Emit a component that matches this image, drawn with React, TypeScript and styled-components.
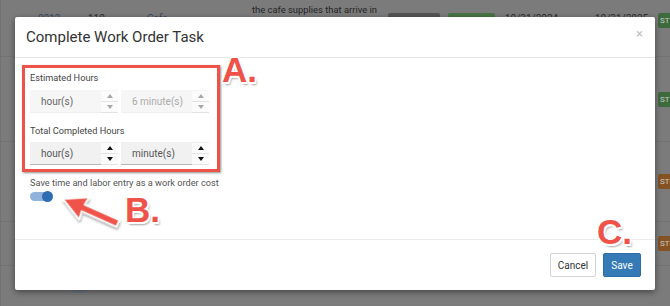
import React from 'react';
import styled, { createGlobalStyle } from 'styled-components';

const GlobalStyle = createGlobalStyle`
  html, body {
    margin: 0;
    padding: 0;
    background: #7b7b7b;
    overflow: hidden;
  }
  body {
    font-family: Roboto, "Liberation Sans", Arial, sans-serif;
  }
`;

const Page = styled.div`
  position: relative;
  width: 670px;
  height: 306px;
  overflow: hidden;
  background: #7b7b7b;
  border-left: 1px solid #727272;
  box-sizing: border-box;
`;

const BgTable = styled.div`
  display: flex;
  flex-direction: column;
`;

const BgRow = styled.div<{ $h: number; $top?: boolean }>`
  display: grid;
  grid-template-columns: 37px 50px 59px 105px 136px 60px 57px 90px 63px 1fr;
  align-items: ${(p) => (p.$top ? 'start' : 'center')};
  height: ${(p) => p.$h}px;
  padding-top: ${(p) => (p.$top ? 13 : 0)}px;
  box-sizing: border-box;
  border-bottom: 1px solid #737373;
  font-size: 10px;
  color: #2e2e2e;
`;

const Cell = styled.div<{ $link?: boolean }>`
  color: ${(p) => (p.$link ? '#3b4a5e' : '#2e2e2e')};
  white-space: nowrap;
`;

const Desc = styled.div`
  margin-top: -9px;
  line-height: 12px;
  font-size: 9.4px;
  color: #252525;
`;

const Badge = styled.div<{ $bg: string; $w: number }>`
  width: ${(p) => p.$w}px;
  height: 14px;
  border-radius: 2px;
  background: ${(p) => p.$bg};
`;

const SideBadge = styled.div<{ $bg: string }>`
  width: 30px;
  height: 15px;
  padding-left: 2px;
  box-sizing: border-box;
  border-radius: 2px;
  background: ${(p) => p.$bg};
  color: #c9c9c9;
  font-size: 8px;
  line-height: 15px;
`;

const BottomRow = styled.div`
  flex: 1;
  display: flex;
  align-items: flex-end;
  padding: 0 0 4px 64px;
`;

const Avatar = styled.div`
  width: 27px;
  height: 27px;
  border-radius: 50%;
  background: #6b7785;
`;

const Modal = styled.div`
  position: absolute;
  left: 14px;
  top: 17px;
  width: 640px;
  height: 273px;
  background: #fff;
  border-radius: 2px;
  box-shadow: 0 2px 6px rgba(0, 0, 0, 0.45);
  display: flex;
  flex-direction: column;
`;

const Header = styled.div`
  height: 40px;
  flex: none;
  display: flex;
  align-items: center;
  justify-content: space-between;
  padding: 0 12px 0 11px;
  border-bottom: 1px solid #e6e6e6;
`;

const Title = styled.h4`
  margin: 0;
  font-size: 15px;
  font-weight: 400;
  color: #333;
`;

const Close = styled.span`
  font-size: 13px;
  color: #c2c2c2;
  margin-top: -7px;
`;

const Body = styled.div`
  flex: 1;
  padding: 7px 7px 0;
`;

const RedBox = styled.div`
  width: 198px;
  box-sizing: border-box;
  border: 3px solid #ef5248;
  padding: 4px 5px 4px 5px;
  box-shadow: 1px 1px 2px rgba(0, 0, 0, 0.45);
`;

const Label = styled.div<{ $mt?: number }>`
  font-size: 9.2px;
  line-height: 12px;
  color: #444;
  margin-top: ${(p) => p.$mt ?? 0}px;
`;

const FieldRow = styled.div<{ $mt: number }>`
  display: flex;
  gap: 3px;
  margin-top: ${(p) => p.$mt}px;
`;

const InputGroup = styled.div<{ $active?: boolean }>`
  display: flex;
  width: 88px;
  height: 23px;
  box-sizing: border-box;
  background: ${(p) => (p.$active ? '#f1f1f1' : '#f6f6f6')};
  border-bottom: 1px solid ${(p) => (p.$active ? '#b5b5b5' : '#f0f0f0')};
`;

const InputText = styled.div<{ $color: string }>`
  flex: 1;
  display: flex;
  align-items: center;
  padding-left: 11px;
  font-size: 10px;
  color: ${(p) => p.$color};
`;

const Spinner = styled.div`
  width: 17px;
  display: flex;
  flex-direction: column;
  gap: 1px;
  padding-top: 1px;
  box-sizing: border-box;
`;

const SpinBtn = styled.div`
  flex: 1;
  display: flex;
  align-items: center;
  justify-content: center;
  background: #fbfbfb;
  box-shadow: 0 1px 0 #e3e3e3;
`;

const Tri = styled.span<{ $down?: boolean; $dark?: boolean }>`
  width: 0;
  height: 0;
  border-left: 3px solid transparent;
  border-right: 3px solid transparent;
  ${(p) => (p.$down ? 'border-top' : 'border-bottom')}: 4px solid ${(p) => (p.$dark ? '#111' : '#a8a8a8')};
`;

const ToggleLabel = styled.div`
  margin: 5px 0 0 8px;
  font-size: 9.2px;
  line-height: 12px;
  color: #555;
`;

const Track = styled.div`
  position: relative;
  width: 21px;
  height: 9px;
  margin: 3px 0 0 8px;
  border-radius: 5px;
  background: #8fb3da;
`;

const Knob = styled.div`
  position: absolute;
  right: -2px;
  top: -1px;
  width: 11px;
  height: 11px;
  border-radius: 50%;
  background: #2f6db3;
`;

const Footer = styled.div`
  height: 50px;
  flex: none;
  display: flex;
  align-items: center;
  justify-content: flex-end;
  gap: 7px;
  padding-right: 14px;
  border-top: 1px solid #ececec;
`;

const Button = styled.button<{ $primary?: boolean }>`
  height: 24px;
  width: ${(p) => (p.$primary ? 38 : 46)}px;
  padding: 0;
  font-family: Roboto, "Liberation Sans", Arial, sans-serif;
  font-size: 10px;
  border-radius: 2px;
  border: 1px solid ${(p) => (p.$primary ? '#2e6da4' : '#d4d4d4')};
  background: ${(p) => (p.$primary ? '#337ab7' : '#fff')};
  color: ${(p) => (p.$primary ? '#fff' : '#333')};
`;

const Mark = styled.div<{ $x: number; $y: number }>`
  position: absolute;
  left: ${(p) => p.$x}px;
  top: ${(p) => p.$y}px;
  font-family: "Liberation Sans", Arial, sans-serif;
  font-weight: 700;
  font-size: 35px;
  line-height: 1;
  color: #ef5248;
  text-shadow:
    -1.5px -1.5px 0 #fff, 1.5px -1.5px 0 #fff, -1.5px 1.5px 0 #fff, 1.5px 1.5px 0 #fff,
    0 -1.5px 0 #fff, 0 1.5px 0 #fff, -1.5px 0 0 #fff, 1.5px 0 0 #fff,
    2px 3px 2px rgba(0, 0, 0, 0.35);
`;

const ArrowLayer = styled.svg`
  position: absolute;
  left: 0;
  top: 0;
  pointer-events: none;
`;

function NumberField({ text, color, active }: { text: string; color: string; active?: boolean }) {
  return (
    <InputGroup $active={active}>
      <InputText $color={color}>{text}</InputText>
      <Spinner>
        <SpinBtn><Tri $dark={active} /></SpinBtn>
        <SpinBtn><Tri $down $dark={active} /></SpinBtn>
      </Spinner>
    </InputGroup>
  );
}

const Blank = () => (
  <>
    <span /><span /><span /><span /><span /><span /><span /><span /><span />
  </>
);

export default function App() {
  return (
    <>
      <GlobalStyle />
      <Page>
        <BgTable>
          <BgRow $h={57} $top>
            <span />
            <Cell $link>0012</Cell>
            <Cell>110</Cell>
            <Cell $link>Cafe</Cell>
            <Desc>the cafe supplies that arrive in</Desc>
            <Badge $bg="#555" $w={52} />
            <Badge $bg="#487646" $w={47} />
            <Cell>10/31/2024</Cell>
            <Cell>10/31/2025</Cell>
            <SideBadge $bg="#3e6b3e">ST</SideBadge>
          </BgRow>
          <BgRow $h={85}>
            <Blank />
            <SideBadge $bg="#3e6b3e">ST</SideBadge>
          </BgRow>
          <BgRow $h={80}>
            <Blank />
            <SideBadge $bg="#855323">ST</SideBadge>
          </BgRow>
          <BgRow $h={44}>
            <Blank />
            <SideBadge $bg="#855323">ST</SideBadge>
          </BgRow>
          <BottomRow>
            <Avatar />
          </BottomRow>
        </BgTable>

        <Modal>
          <Header>
            <Title>Complete Work Order Task</Title>
            <Close>×</Close>
          </Header>
          <Body>
            <RedBox>
              <Label>Estimated Hours</Label>
              <FieldRow $mt={6}>
                <NumberField text="hour(s)" color="#666" />
                <NumberField text="6 minute(s)" color="#aaa" />
              </FieldRow>
              <Label $mt={12}>Total Completed Hours</Label>
              <FieldRow $mt={5}>
                <NumberField text="hour(s)" color="#555" active />
                <NumberField text="minute(s)" color="#555" active />
              </FieldRow>
            </RedBox>
            <ToggleLabel>Save time and labor entry as a work order cost</ToggleLabel>
            <Track>
              <Knob />
            </Track>
          </Body>
          <Footer>
            <Button>Cancel</Button>
            <Button $primary>Save</Button>
          </Footer>

          <Mark $x={207} $y={35}>A.</Mark>
          <Mark $x={110} $y={175}>B.</Mark>
          <Mark $x={582} $y={197}>C.</Mark>
          <ArrowLayer width="640" height="273" viewBox="0 0 640 273">
            <defs>
              <filter id="sh" x="-20%" y="-20%" width="140%" height="140%">
                <feDropShadow dx="1.5" dy="2" stdDeviation="1.2" floodColor="#000" floodOpacity="0.35" />
              </filter>
            </defs>
            <g transform="translate(48 182) rotate(24)" filter="url(#sh)">
              <polygon
                points="0,0 23,-12 22,-3.5 60,-3.5 60,3.5 22,3.5 23,12"
                fill="#ef5248"
                stroke="#fff"
                strokeWidth="1.6"
                strokeLinejoin="round"
              />
            </g>
          </ArrowLayer>
        </Modal>
      </Page>
    </>
  );
}
